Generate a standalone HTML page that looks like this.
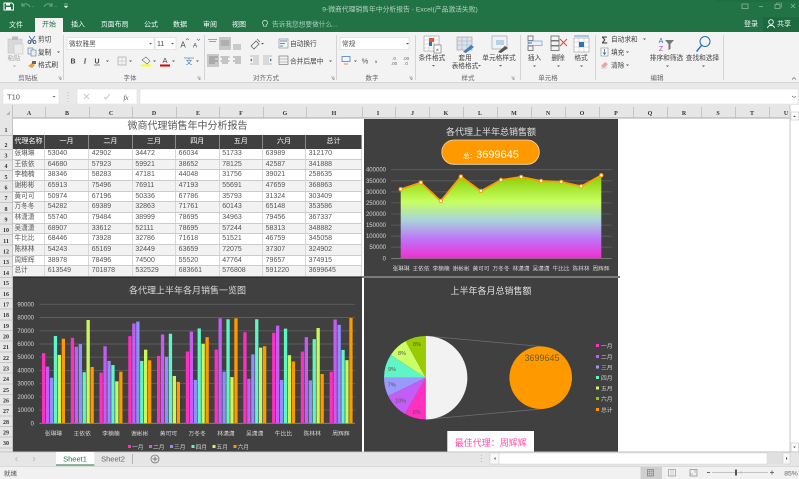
<!DOCTYPE html>
<html lang="zh-CN"><head><meta charset="utf-8"><title>Excel</title>
<style>
html,body{margin:0;padding:0;background:#fff;width:799px;height:479px;overflow:hidden}
body{position:relative;font-family:"Liberation Sans","Noto Sans CJK SC",sans-serif;filter:blur(.25px)}
#grid{position:absolute;left:362px;top:118px;width:428px;height:334px;background-color:#fff}
#t{position:absolute;left:13px;top:118px;width:349px;background:#fff;color:#555}
#t h1{margin:0;height:17px;line-height:17px;font-size:10px;font-weight:normal;text-align:center;color:#595959}
.r{display:grid;grid-template-columns:32px 44px 43.7px 43.3px 43.6px 43.4px 43px 56px;height:10.67px;line-height:10px;font-size:7px;box-sizing:border-box;border-bottom:1px solid #cccccc}
.r span{padding-left:2.7px;border-right:1px solid #d8d8d8;white-space:nowrap;overflow:hidden}
.r:nth-child(odd){background:#f2f2f2}
.r span:first-child{padding-left:1.5px;font-size:6.7px}
.h{height:14px;line-height:14px;background:#404040;color:#fff;border:0;font-weight:normal;background:#404040!important}
.h span{text-align:center;padding:0;border-right:1px solid #8a8a8a}
.h span:first-child{padding:0;font-size:7px}
svg{position:absolute;left:0;top:0}
svg text{font-family:"Liberation Sans","Noto Sans CJK SC",sans-serif}
.c{text-anchor:middle}.e{text-anchor:end}
.tb{font-size:7px;fill:#f4f9f6}
.rb{font-size:6.7px;fill:#444}
.lb{font-size:6.5px;fill:#666}
.h6{font-size:6px;fill:#333;font-family:"Liberation Serif",serif!important;text-anchor:middle;font-weight:bold}
.rn{font-size:6px;fill:#333;font-family:"Liberation Serif",serif!important;text-anchor:middle;font-weight:bold}
.ax{font-size:6px;fill:#d4d4d4}
.ic{fill:none;stroke:#666;stroke-width:.8}
.m{fill:#ff2fc0}.f{fill:#c55cf5}.a{fill:#8f8ffb}.p{fill:#5ff5c5}.y{fill:#c8f85a}.j{fill:#ff9900}
</style></head><body>
<div id="grid"></div>
<div id="t">
<h1>微商代理销售年中分析报告</h1>
<div>
<div class="r h"><span>代理名称</span><span>一月</span><span>二月</span><span>三月</span><span>四月</span><span>五月</span><span>六月</span><span>总计</span></div>
<div class="r" style="background:#fff"><span>张琳琳</span><span>53040</span><span>42902</span><span>34472</span><span>66034</span><span>51733</span><span>63989</span><span>312170</span></div>
<div class="r" style="background:#f2f2f2"><span>王依依</span><span>64680</span><span>57923</span><span>59921</span><span>38652</span><span>78125</span><span>42587</span><span>341888</span></div>
<div class="r" style="background:#fff"><span>李楠楠</span><span>38346</span><span>58283</span><span>47181</span><span>44048</span><span>31756</span><span>39021</span><span>258635</span></div>
<div class="r" style="background:#f2f2f2"><span>谢彬彬</span><span>65913</span><span>75496</span><span>76911</span><span>47193</span><span>55691</span><span>47659</span><span>368863</span></div>
<div class="r" style="background:#fff"><span>黄可可</span><span>50974</span><span>67196</span><span>50336</span><span>67786</span><span>35793</span><span>31324</span><span>303409</span></div>
<div class="r" style="background:#f2f2f2"><span>万冬冬</span><span>54282</span><span>69389</span><span>32863</span><span>71761</span><span>60143</span><span>65148</span><span>353586</span></div>
<div class="r" style="background:#fff"><span>林潇潇</span><span>55740</span><span>79484</span><span>38999</span><span>78695</span><span>34963</span><span>79456</span><span>367337</span></div>
<div class="r" style="background:#f2f2f2"><span>吴潇潇</span><span>68907</span><span>33612</span><span>52111</span><span>78695</span><span>57244</span><span>58313</span><span>348882</span></div>
<div class="r" style="background:#fff"><span>牛比比</span><span>68446</span><span>73928</span><span>32786</span><span>71618</span><span>51521</span><span>46759</span><span>345058</span></div>
<div class="r" style="background:#f2f2f2"><span>陈林林</span><span>54243</span><span>65169</span><span>32449</span><span>63659</span><span>72075</span><span>37307</span><span>324902</span></div>
<div class="r" style="background:#fff"><span>周辉辉</span><span>38978</span><span>78496</span><span>74500</span><span>55520</span><span>47764</span><span>79657</span><span>374915</span></div>
<div class="r" style="background:#f2f2f2"><span>总计</span><span>613549</span><span>701878</span><span>532529</span><span>683661</span><span>576808</span><span>591220</span><span>3699645</span></div>
</div>
</div>
<svg width="799" height="479" viewBox="0 0 799 479">
<defs>
<linearGradient id="ag" gradientUnits="userSpaceOnUse" x1="0" y1="175" x2="0" y2="258.3">
<stop offset="0" stop-color="#88cc00"/><stop offset=".32" stop-color="#c8ff60"/><stop offset=".54" stop-color="#a8d4dc"/><stop offset=".78" stop-color="#c070f8"/><stop offset="1" stop-color="#f22fd0"/>
</linearGradient>
</defs>
<!-- title bar -->
<rect width="799" height="32" fill="#217346"/>
<rect x="715" y="0" width="84" height="2" fill="#1f6e42"/>
<path d="M4 3h8l1.500 1.500V10H4z" fill="none" stroke="#fff" stroke-width="1"/><rect x="6" y="3" width="4" height="2.500" fill="#fff"/><rect x="6" y="7" width="5" height="3" fill="#fff"/>
<path d="M22 6c2-3 6-3 8 1M22 3v3h3" fill="none" stroke="#6fa387" stroke-width="1"/><path d="M32 6l2 0-1 1z" fill="#6fa387"/>
<path d="M52 6c-2-3-6-3-8 1M52 3v3h-3" fill="none" stroke="#6fa387" stroke-width="1"/><path d="M55 6l2 0-1 1z" fill="#6fa387"/>
<path d="M64 4h4M64 6l2 2 2-2z" fill="#d8e8de" stroke="#d8e8de" stroke-width=".5"/>
<text x="400" y="11.500" class="c" style="font-size:6.800px;fill:#b5d3c1">9-微商代理销售年中分析报告 - Excel(产品激活失败)</text>
<rect x="742" y="4" width="6" height="4.500" fill="none" stroke="#8ab59b" stroke-width=".8"/>
<path d="M759 6.500h4" stroke="#8ab59b" stroke-width=".8"/>
<rect x="775" y="4.500" width="5" height="4" fill="none" stroke="#8ab59b" stroke-width=".8"/><path d="M776.500 4.500V3h5v4h-1.500" fill="none" stroke="#8ab59b" stroke-width=".6"/>
<path d="M791 4l4 4M795 4l-4 4" stroke="#8ab59b" stroke-width=".8"/>
<rect x="35" y="18" width="28" height="15" fill="#f3f3f3"/>
<text x="16" y="27" class="c tb">文件</text>
<text x="49" y="26.500" class="c" style="font-size:7px;fill:#217346">开始</text>
<text x="78" y="26.500" class="c tb">插入</text>
<text x="114.700" y="26.500" class="c tb">页面布局</text>
<text x="151" y="26.500" class="c tb">公式</text>
<text x="180" y="26.500" class="c tb">数据</text>
<text x="210" y="26.500" class="c tb">审阅</text>
<text x="239" y="26.500" class="c tb">视图</text>
<path d="M265 20.500a2.300 2.300 0 0 1 1.500 4.200v1.500h-3v-1.500a2.300 2.300 0 0 1 1.500-4.200z" fill="none" stroke="#d8e8de" stroke-width=".7"/>
<text x="272" y="26.500" style="font-size:6.700px;fill:#a5cbb4">告诉我您想要做什么...</text>
<text x="751" y="26" class="c tb">登录</text>
<rect x="763" y="17" width="36" height="15" fill="#1d6a40"/>
<circle cx="771" cy="22" r="2.300" fill="none" stroke="#fff" stroke-width=".9"/><path d="M767.500 28c.5-3.500 6.500-3.500 7 0" fill="none" stroke="#fff" stroke-width=".9"/>
<text x="784" y="26" class="c tb">共享</text>
<!-- ribbon -->
<rect y="32" width="799" height="51" fill="#f3f3f3"/>
<rect y="83" width="799" height="22" fill="#e9e9e9"/>
<rect y="82" width="799" height="1" fill="#d6d6d6"/>
<path d="M63.500 35v45M204.500 35v45M336.500 35v45M415.500 35v45M520.500 35v45M595.500 35v45M723.500 35v45" stroke="#d4d4d4"/>
<!-- clipboard -->
<rect x="8" y="39" width="14" height="14" fill="#d9d9d9" stroke="#c0c0c0" stroke-width=".6"/><rect x="12" y="36.500" width="6" height="3.500" fill="#bdbdbd"/><rect x="14" y="44" width="9" height="10" fill="#ececec" stroke="#c8c8c8" stroke-width=".6"/>
<text x="14" y="60" class="c" style="font-size:6.500px;fill:#a8a8a8">粘贴</text><path d="M13 65.500h3l-1.500 1.500z" fill="#aaa"/>
<path d="M29 36l5 7M35 36l-5 7" stroke="#2f72b5" stroke-width=".9"/><circle cx="29.500" cy="42" r="1.500" fill="none" stroke="#444" stroke-width=".7"/><circle cx="34.500" cy="42" r="1.500" fill="none" stroke="#444" stroke-width=".7"/>
<text x="38" y="41.500" class="rb">剪切</text>
<rect x="28" y="48" width="5" height="6" fill="#eee" stroke="#6c8cb0" stroke-width=".7"/><rect x="31" y="50" width="5" height="6" fill="#eee" stroke="#6c8cb0" stroke-width=".7"/>
<text x="38" y="54.500" class="rb">复制</text><path d="M57 51.500h3l-1.500 1.500z" fill="#555"/>
<path d="M28 66l4-3 3 2-3 3z" fill="#e8a33c"/><rect x="32" y="61" width="4" height="3" fill="#666"/>
<text x="38" y="67" class="rb">格式刷</text>
<text x="28" y="80" class="c lb">剪贴板</text><path d="M58 77h3v3M61 80l-2-2" fill="none" stroke="#888" stroke-width=".6"/>
<!-- font -->
<rect x="67" y="37.500" width="87" height="12" fill="#fff" stroke="#d8d8d8" stroke-width=".6"/>
<text x="69" y="46" style="font-size:6.700px;fill:#555">微软雅黑</text><path d="M149 43h3l-1.500 1.500z" fill="#555"/>
<rect x="155" y="37.500" width="21" height="12" fill="#fff" stroke="#d8d8d8" stroke-width=".6"/>
<text x="157" y="46" style="font-size:7px;fill:#444">11</text><path d="M171 43h3l-1.500 1.500z" fill="#555"/>
<text x="183" y="47.500" class="c" style="font-size:8px;fill:#444">A</text><path d="M186 40l1.500-1.500 1.500 1.500" fill="none" stroke="#2f72b5" stroke-width=".6"/>
<text x="195" y="47.500" class="c" style="font-size:6.500px;fill:#444">A</text><path d="M197 39l1.500 1.500 1.500-1.500" fill="none" stroke="#2f72b5" stroke-width=".6"/>
<text x="73" y="63.500" class="c" style="font-size:7px;font-weight:bold;fill:#444">B</text>
<text x="85" y="63.500" class="c" style="font-size:7px;font-style:italic;font-family:'Liberation Serif',serif;font-weight:bold;fill:#444">I</text>
<text x="97" y="63.500" class="c" style="font-size:7px;font-weight:bold;fill:#444">U</text><path d="M94 65h6" stroke="#444" stroke-width=".6"/><path d="M106 60.500h3l-1.500 1.500z" fill="#555"/>
<rect x="118" y="57" width="8" height="8" fill="none" stroke="#999" stroke-width=".6"/><path d="M122 57v8M118 61h8" stroke="#bbb" stroke-width=".5"/><path d="M129 60.500h3l-1.500 1.500z" fill="#555"/>
<path d="M142 60l4-3 4 4-3 3z" fill="#f5f5f5" stroke="#666" stroke-width=".6"/><rect x="141" y="64.500" width="10" height="2" fill="#ffff00"/><path d="M153 60.500h3l-1.500 1.500z" fill="#555"/>
<text x="165" y="63" class="c" style="font-size:7.500px;fill:#444">A</text><rect x="160" y="64.500" width="10" height="2" fill="#e00000"/><path d="M172 60.500h3l-1.500 1.500z" fill="#555"/>
<text x="189" y="64" class="c" style="font-size:6.500px;fill:#2f72b5">文</text><path d="M184 58h10" stroke="#2f72b5" stroke-width=".6"/><path d="M196 60.500h3l-1.500 1.500z" fill="#555"/>
<text x="130" y="80" class="c lb">字体</text><path d="M197 77h3v3M200 80l-2-2" fill="none" stroke="#888" stroke-width=".6"/>
<!-- align -->
<rect x="219" y="37" width="12" height="13" fill="#c8c8c8"/><rect x="207" y="54" width="12" height="13" fill="#c8c8c8"/>
<path d="M208 39.500h9M209 41.500h7M220.500 41h9M220.500 43h9M220.500 45h9M233 45h8M233 47h8M233 49h8" stroke="#888" stroke-width=".7"/>
<path d="M209 57h9M209 59h6M209 61h9M209 63h6M220.500 57h9M222 59h6M220.500 61h9M222 63h6M233 57h8M235 59h6M233 61h8M235 63h6" stroke="#777" stroke-width=".7"/>
<path d="M251 46l5-5 3 3-5 5zM257 39l3 3" fill="none" stroke="#666" stroke-width=".8"/><path d="M261 43h3l-1.500 1.500z" fill="#555"/>
<path d="M250 56h9M250 64h9M253 58h6M253 60h6M253 62h6M263 56h9M263 64h9M263 58h6M263 60h6M263 62h6" stroke="#888" stroke-width=".6"/><path d="M250 60l2-1.500v3zM272 60l-2-1.500v3z" fill="#2f72b5"/>
<rect x="279" y="39" width="9" height="9" fill="none" stroke="#888" stroke-width=".6"/><path d="M280 41h7M280 43.500h5M280 46h3" stroke="#2f72b5" stroke-width=".7"/>
<text x="290" y="46" class="rb">自动换行</text>
<rect x="279" y="56" width="9" height="8.500" fill="none" stroke="#666" stroke-width=".6"/><path d="M279 59h9M279 62h9" stroke="#888" stroke-width=".6"/>
<text x="290" y="63.500" class="rb">合并后居中</text><path d="M329 60.500h3l-1.500 1.500z" fill="#555"/>
<text x="266" y="80" class="c lb">对齐方式</text><path d="M331 77h3v3M334 80l-2-2" fill="none" stroke="#888" stroke-width=".6"/>
<!-- number -->
<rect x="340" y="37.500" width="69" height="12" fill="#fff" stroke="#d8d8d8" stroke-width=".6"/>
<text x="342" y="46" style="font-size:6.700px;fill:#555">常规</text><path d="M406 43h3l-1.500 1.500z" fill="#555"/>
<rect x="342" y="56.500" width="8" height="5" fill="none" stroke="#2f72b5" stroke-width=".7"/><path d="M344 64h4" stroke="#d89a30" stroke-width="1"/><path d="M354 60.500h3l-1.500 1.500z" fill="#555"/>
<text x="365" y="63.500" class="c" style="font-size:7.500px;fill:#555">%</text>
<text x="376" y="62" class="c" style="font-size:8px;font-weight:bold;fill:#555">,</text>
<text x="394" y="60" class="c" style="font-size:4.500px;fill:#666">.0</text><text x="394" y="65" class="c" style="font-size:4.500px;fill:#666">.00</text>
<text x="406" y="60" class="c" style="font-size:4.500px;fill:#666">.00</text><text x="406" y="65" class="c" style="font-size:4.500px;fill:#666">.0</text>
<text x="372" y="80" class="c lb">数字</text><path d="M409 77h3v3M412 80l-2-2" fill="none" stroke="#888" stroke-width=".6"/>
<!-- styles -->
<rect x="424" y="36" width="15" height="15" fill="#fff" stroke="#999" stroke-width=".6"/><path d="M424 40h15M424 44h15M424 48h15M429 36v15M434 36v15" stroke="#bbb" stroke-width=".5"/><rect x="429" y="38" width="5" height="4" fill="#e8553a"/><rect x="429" y="42" width="3" height="4" fill="#2f72b5"/><rect x="434" y="45" width="7" height="8" fill="#fff" stroke="#666" stroke-width=".6"/><text x="437.500" y="51.500" class="c" style="font-size:5px;fill:#444">≠</text>
<text x="432" y="60" class="c rb">条件格式</text><path d="M432 65h3l-1.500 1.500z" fill="#555"/>
<rect x="457" y="37" width="15" height="13" fill="#d9e3ef" stroke="#999" stroke-width=".6"/><path d="M457 41h15M457 45h15M462 37v13M467 37v13" stroke="#aab" stroke-width=".5"/><path d="M463 52l8-7 3 2-8 6z" fill="#3a7fbf"/>
<text x="465" y="60" class="c rb">套用</text><text x="465" y="68" class="c rb">表格格式</text><path d="M478 65h3l-1.500 1.500z" fill="#555"/>
<rect x="492" y="36" width="15" height="13" fill="#eef3f8" stroke="#999" stroke-width=".6"/><rect x="496" y="40" width="8" height="5" fill="#b8d0e8"/><path d="M498 52l7-6 3 2-7 5z" fill="#555"/>
<text x="499" y="60" class="c rb">单元格样式</text><path d="M499 65h3l-1.500 1.500z" fill="#555"/>
<text x="468" y="80" class="c lb">样式</text><path d="M511 77h3v3M514 80l-2-2" fill="none" stroke="#888" stroke-width=".6"/>
<!-- cells -->
<rect x="528" y="36" width="5" height="4.500" class="ic"/><rect x="528" y="46" width="5" height="4.500" class="ic"/><rect x="528" y="41" width="14" height="4.500" fill="#eef" stroke="#5f8fc0" stroke-width=".6"/><path d="M528 43h4" stroke="#2f72b5"/>
<text x="534.500" y="60" class="c rb">插入</text><path d="M533 65.500h3l-1.500 1.500z" fill="#555"/>
<rect x="551" y="36" width="8" height="4.500" class="ic"/><rect x="551" y="46" width="8" height="4.500" class="ic"/><rect x="551" y="41" width="8" height="4.500" class="ic"/><path d="M560 39l7 7M567 39l-7 7" stroke="#e2492f" stroke-width="1"/>
<text x="558" y="60" class="c rb">删除</text><path d="M557 65.500h3l-1.500 1.500z" fill="#555"/>
<rect x="574" y="38" width="15" height="14" fill="#fff" stroke="#999" stroke-width=".6"/><path d="M574 42h15M574 47h15M579 38v14M584 38v14" stroke="#bbb" stroke-width=".5"/><rect x="579" y="42" width="5" height="5" fill="#2f72b5"/><path d="M574 36h15" stroke="#2f72b5" stroke-width=".7"/>
<text x="581" y="60" class="c rb">格式</text><path d="M580 65.500h3l-1.500 1.500z" fill="#555"/>
<text x="548" y="80" class="c lb">单元格</text>
<!-- edit -->
<text x="604.500" y="43.500" class="c" style="font-size:10px;font-weight:bold;fill:#444">Σ</text>
<text x="611" y="41.500" class="rb">自动求和</text><path d="M643 38.500h3l-1.500 1.500z" fill="#555"/>
<rect x="601" y="48" width="7" height="8" fill="#fff" stroke="#888" stroke-width=".6"/><path d="M604.500 49v5M603 52.500l1.500 2 1.500-2" stroke="#2f72b5" stroke-width=".8" fill="none"/>
<text x="611" y="54.500" class="rb">填充</text><path d="M626 51.500h3l-1.500 1.500z" fill="#555"/>
<path d="M601 66l4-4 3 2-4 4z" fill="#f0a0a8"/><path d="M601 68h6" stroke="#bbb" stroke-width=".6"/>
<text x="611" y="67.500" class="rb">清除</text><path d="M626 64.500h3l-1.500 1.500z" fill="#555"/>
<text x="661" y="43" class="c" style="font-size:7px;fill:#2f72b5">A</text><text x="661" y="51" class="c" style="font-size:7px;fill:#a24ac8">Z</text>
<path d="M665 40h9l-3.500 4v5l-2 1v-6z" fill="#777"/>
<text x="666.500" y="60" class="c rb">排序和筛选</text><path d="M666 65.500h3l-1.500 1.500z" fill="#555"/>
<circle cx="705" cy="41.500" r="5" fill="none" stroke="#2f72b5" stroke-width="1.100"/><path d="M701.500 45.500l-5 6" stroke="#2f72b5" stroke-width="1.400"/>
<text x="702.500" y="60" class="c rb">查找和选择</text><path d="M702 65.500h3l-1.500 1.500z" fill="#555"/>
<text x="657" y="80" class="c lb">编辑</text>
<path d="M792 79.500l2-2 2 2" fill="none" stroke="#666" stroke-width=".7"/>
<!-- formula bar -->
<rect x="3" y="89" width="56" height="15" fill="#fff" stroke="#dcdcdc" stroke-width=".5"/><text x="7" y="99.500" style="font-size:7.500px;fill:#555">T10</text><path d="M52.500 96h3l-1.500 1.500z" fill="#666"/>
<path d="M68 92v1M68 95v1M68 98v1M68 101v1" stroke="#b5b5b5" stroke-width=".9"/>
<rect x="77" y="89" width="60" height="15" fill="#fff" stroke="#dcdcdc" stroke-width=".5"/>
<path d="M84 94l5 5M89 94l-5 5" stroke="#bbb" stroke-width=".8"/><path d="M104 97l2 2 4-5" fill="none" stroke="#bbb" stroke-width=".8"/><text x="126" y="100" class="c" style="font-size:7px;font-style:italic;font-family:'Liberation Serif',serif;fill:#555">fx</text>
<rect x="140" y="89" width="658" height="15" fill="#fff" stroke="#dcdcdc" stroke-width=".5"/><path d="M792 96l2 1.500 2-1.500" fill="none" stroke="#666" stroke-width=".6"/>
<!-- column headers -->
<rect y="105" width="790" height="13" fill="#e6e6e6"/><rect y="117.500" width="790" height="1" fill="#a8a8a8"/>
<rect y="105" width="13" height="347" fill="#e6e6e6"/>
<path d="M6 115l4 0v-4z" fill="#b8b8b8"/>
<path d="M12.500 105V452M45.500 107v11M89.500 107v11M132.500 107v11M176.500 107v11M219.500 107v11M263.500 107v11M306.500 107v11M362.500 107v11M395.500 107v11M429.500 107v11M463.500 107v11M497.500 107v11M531.500 107v11M565.500 107v11M599.500 107v11M633.500 107v11M667.500 107v11M701.500 107v11M735.500 107v11M769.500 107v11" stroke="#bcbcbc" stroke-width=".8"/>
<g>
<text x="29" y="115" class="h6">A</text><text x="67" y="115" class="h6">B</text><text x="111" y="115" class="h6">C</text><text x="154" y="115" class="h6">D</text><text x="198" y="115" class="h6">E</text><text x="241" y="115" class="h6">F</text><text x="285" y="115" class="h6">G</text><text x="334" y="115" class="h6">H</text>
<text x="378" y="115" class="h6">I</text><text x="412.500" y="115" class="h6">J</text><text x="446" y="115" class="h6">K</text><text x="480" y="115" class="h6">L</text><text x="514" y="115" class="h6">M</text><text x="548" y="115" class="h6">N</text><text x="582" y="115" class="h6">O</text><text x="616" y="115" class="h6">P</text><text x="650" y="115" class="h6">Q</text><text x="684" y="115" class="h6">R</text><text x="718" y="115" class="h6">S</text><text x="752" y="115" class="h6">T</text><text x="786" y="115" class="h6">U</text>
</g>
<path d="M0 135.500h13M0 149.500h13M0 160h13M0 170.500h13M0 181h13M0 192h13M0 202.500h13M0 213h13M0 224h13M0 234.500h13M0 245h13M0 256h13M0 266.500h13M0 277.500h13M0 288h13M0 298.500h13M0 309h13M0 320h13M0 330.500h13M0 341h13M0 352h13M0 362.500h13M0 373h13M0 384h13M0 394.500h13M0 405h13M0 416h13M0 426.500h13M0 437h13M0 448h13" stroke="#bcbcbc" stroke-width=".7"/>
<g>
<text x="6" y="132" class="rn">1</text><text x="6" y="147" class="rn">2</text><text x="6" y="157.500" class="rn">3</text><text x="6" y="168" class="rn">4</text><text x="6" y="179" class="rn">5</text><text x="6" y="189.500" class="rn">6</text><text x="6" y="200" class="rn">7</text><text x="6" y="211" class="rn">8</text><text x="6" y="221.500" class="rn">9</text><text x="6" y="232" class="rn">10</text><text x="6" y="243" class="rn">11</text><text x="6" y="253.500" class="rn">12</text><text x="6" y="264" class="rn">13</text><text x="6" y="275" class="rn">14</text>
<text x="6" y="285" class="rn">15</text><text x="6" y="296" class="rn">16</text><text x="6" y="306.500" class="rn">17</text><text x="6" y="317" class="rn">18</text><text x="6" y="328" class="rn">19</text><text x="6" y="338.500" class="rn">20</text><text x="6" y="349" class="rn">21</text><text x="6" y="360" class="rn">22</text><text x="6" y="370.500" class="rn">23</text><text x="6" y="381" class="rn">24</text><text x="6" y="392" class="rn">25</text><text x="6" y="402.500" class="rn">26</text><text x="6" y="413" class="rn">27</text><text x="6" y="424" class="rn">28</text><text x="6" y="434.500" class="rn">29</text><text x="6" y="445" class="rn">30</text>
</g>
<!-- bar chart -->
<rect x="13" y="277" width="349" height="175" fill="#404040"/>
<rect x="13" y="276.500" width="349" height="1.500" fill="#2e2e2e"/>
<text x="187.500" y="293.500" class="c" style="font-size:9px;fill:#d9d9d9">各代理上半年各月销售一览图</text>
<path d="M39.500 304.300H355M39.500 317.500H355M39.500 330.800H355M39.500 344H355M39.500 357.200H355M39.500 370.400H355M39.500 383.600H355M39.500 396.900H355M39.500 410.100H355" stroke="#5e5e5e" stroke-width=".9"/>
<path d="M39.500 423.300H355" stroke="#8a8a8a" stroke-width=".8"/>
<g class="ax e">
<text x="34" y="306.300">90000</text><text x="34" y="319.500">80000</text><text x="34" y="332.800">70000</text><text x="34" y="346">60000</text><text x="34" y="359.200">50000</text><text x="34" y="372.400">40000</text><text x="34" y="385.600">30000</text><text x="34" y="398.900">20000</text><text x="34" y="412.100">10000</text><text x="34" y="425.300">0</text>
</g>
<g transform="translate(42,423.300) scale(1,-0.001322)"><rect x="0" width="3.300" height="53040" class="m"/><rect x="3.900" width="3.300" height="42902" class="f"/><rect x="7.900" width="3.300" height="34472" class="a"/><rect x="11.800" width="3.300" height="66034" class="p"/><rect x="15.700" width="3.300" height="51733" class="y"/><rect x="19.700" width="3.300" height="63989" class="j"/></g>
<g transform="translate(70.800,423.300) scale(1,-0.001322)"><rect x="0" width="3.300" height="64680" class="m"/><rect x="3.900" width="3.300" height="57923" class="f"/><rect x="7.900" width="3.300" height="59921" class="a"/><rect x="11.800" width="3.300" height="38652" class="p"/><rect x="15.700" width="3.300" height="78125" class="y"/><rect x="19.700" width="3.300" height="42587" class="j"/></g>
<g transform="translate(99.500,423.300) scale(1,-0.001322)"><rect x="0" width="3.300" height="38346" class="m"/><rect x="3.900" width="3.300" height="58283" class="f"/><rect x="7.900" width="3.300" height="47181" class="a"/><rect x="11.800" width="3.300" height="44048" class="p"/><rect x="15.700" width="3.300" height="31756" class="y"/><rect x="19.700" width="3.300" height="39021" class="j"/></g>
<g transform="translate(128.300,423.300) scale(1,-0.001322)"><rect x="0" width="3.300" height="65913" class="m"/><rect x="3.900" width="3.300" height="75496" class="f"/><rect x="7.900" width="3.300" height="76911" class="a"/><rect x="11.800" width="3.300" height="47193" class="p"/><rect x="15.700" width="3.300" height="55691" class="y"/><rect x="19.700" width="3.300" height="47659" class="j"/></g>
<g transform="translate(157,423.300) scale(1,-0.001322)"><rect x="0" width="3.300" height="50974" class="m"/><rect x="3.900" width="3.300" height="67196" class="f"/><rect x="7.900" width="3.300" height="50336" class="a"/><rect x="11.800" width="3.300" height="67786" class="p"/><rect x="15.700" width="3.300" height="35793" class="y"/><rect x="19.700" width="3.300" height="31324" class="j"/></g>
<g transform="translate(185.800,423.300) scale(1,-0.001322)"><rect x="0" width="3.300" height="54282" class="m"/><rect x="3.900" width="3.300" height="69389" class="f"/><rect x="7.900" width="3.300" height="32863" class="a"/><rect x="11.800" width="3.300" height="71761" class="p"/><rect x="15.700" width="3.300" height="60143" class="y"/><rect x="19.700" width="3.300" height="65148" class="j"/></g>
<g transform="translate(214.600,423.300) scale(1,-0.001322)"><rect x="0" width="3.300" height="55740" class="m"/><rect x="3.900" width="3.300" height="79484" class="f"/><rect x="7.900" width="3.300" height="38999" class="a"/><rect x="11.800" width="3.300" height="78695" class="p"/><rect x="15.700" width="3.300" height="34963" class="y"/><rect x="19.700" width="3.300" height="79456" class="j"/></g>
<g transform="translate(243.300,423.300) scale(1,-0.001322)"><rect x="0" width="3.300" height="68907" class="m"/><rect x="3.900" width="3.300" height="33612" class="f"/><rect x="7.900" width="3.300" height="52111" class="a"/><rect x="11.800" width="3.300" height="78695" class="p"/><rect x="15.700" width="3.300" height="57244" class="y"/><rect x="19.700" width="3.300" height="58313" class="j"/></g>
<g transform="translate(272.100,423.300) scale(1,-0.001322)"><rect x="0" width="3.300" height="68446" class="m"/><rect x="3.900" width="3.300" height="73928" class="f"/><rect x="7.900" width="3.300" height="32786" class="a"/><rect x="11.800" width="3.300" height="71618" class="p"/><rect x="15.700" width="3.300" height="51521" class="y"/><rect x="19.700" width="3.300" height="46759" class="j"/></g>
<g transform="translate(300.800,423.300) scale(1,-0.001322)"><rect x="0" width="3.300" height="54243" class="m"/><rect x="3.900" width="3.300" height="65169" class="f"/><rect x="7.900" width="3.300" height="32449" class="a"/><rect x="11.800" width="3.300" height="63659" class="p"/><rect x="15.700" width="3.300" height="72075" class="y"/><rect x="19.700" width="3.300" height="37307" class="j"/></g>
<g transform="translate(329.600,423.300) scale(1,-0.001322)"><rect x="0" width="3.300" height="38978" class="m"/><rect x="3.900" width="3.300" height="78496" class="f"/><rect x="7.900" width="3.300" height="74500" class="a"/><rect x="11.800" width="3.300" height="55520" class="p"/><rect x="15.700" width="3.300" height="47764" class="y"/><rect x="19.700" width="3.300" height="79657" class="j"/></g>
<g class="c" style="font-size:5.800px;fill:#d4d4d4">
<text x="53.500" y="435.500">张琳琳</text><text x="82.200" y="435.500">王依依</text><text x="111" y="435.500">李楠楠</text><text x="139.700" y="435.500">谢彬彬</text><text x="168.500" y="435.500">黄可可</text><text x="197.200" y="435.500">万冬冬</text><text x="226" y="435.500">林潇潇</text><text x="254.700" y="435.500">吴潇潇</text><text x="283.500" y="435.500">牛比比</text><text x="312.200" y="435.500">陈林林</text><text x="341" y="435.500">周辉辉</text>
</g>
<rect x="128" y="445" width="3" height="3" class="m"/><rect x="149" y="445" width="3" height="3" class="f"/><rect x="170" y="445" width="3" height="3" class="a"/><rect x="191.500" y="445" width="3" height="3" class="p"/><rect x="212.500" y="445" width="3" height="3" class="y"/><rect x="233.500" y="445" width="3" height="3" class="j"/>
<g style="font-size:5.800px;fill:#d4d4d4">
<text x="132" y="449">一月</text><text x="153" y="449">二月</text><text x="174" y="449">三月</text><text x="195.500" y="449">四月</text><text x="216.500" y="449">五月</text><text x="237.500" y="449">六月</text>
</g>
<!-- area chart -->
<rect x="364" y="119" width="254" height="157" fill="#404040"/>
<text x="491" y="135" class="c" style="font-size:9px;fill:#e0e0e0">各代理上半年总销售额</text>
<rect x="441.800" y="140" width="97.500" height="24.300" rx="12" fill="#ff9900" stroke="#f3dcae" stroke-width=".8"/>
<text x="491" y="158" class="c" style="fill:#fff"><tspan style="font-size:6.500px">总：</tspan><tspan style="font-size:11px">3699645</tspan></text>
<path d="M391 169.700H611.700M391 180.800H611.700M391 191.900H611.700M391 202.900H611.700M391 214H611.700M391 225.100H611.700M391 236.200H611.700M391 247.200H611.700" stroke="#5e5e5e" stroke-width=".8"/>
<path d="M391 258.500H611.700" stroke="#8a8a8a" stroke-width=".8"/>
<path d="M400.700 189.200L420.800 182.600 440.800 201 460.900 176.600 480.900 191.100 501 180 521.100 176.900 541.100 181 561.200 181.900 581.200 186.300 601.300 175.300V258.300H400.700z" fill="url(#ag)"/>
<path d="M400.700 189.200L420.800 182.600 440.800 201 460.900 176.600 480.900 191.100 501 180 521.100 176.900 541.100 181 561.200 181.900 581.200 186.300 601.300 175.300" fill="none" stroke="#ff9900" stroke-width="1.800"/>
<g fill="#fff" stroke="#ff9900" stroke-width="1">
<circle cx="400.700" cy="189.200" r="1.700"/><circle cx="420.800" cy="182.600" r="1.700"/><circle cx="440.800" cy="201" r="1.700"/><circle cx="460.900" cy="176.600" r="1.700"/><circle cx="480.900" cy="191.100" r="1.700"/><circle cx="501" cy="180" r="1.700"/><circle cx="521.100" cy="176.900" r="1.700"/><circle cx="541.100" cy="181" r="1.700"/><circle cx="561.200" cy="181.900" r="1.700"/><circle cx="581.200" cy="186.300" r="1.700"/><circle cx="601.300" cy="175.300" r="1.700"/>
</g>
<g class="ax e">
<text x="386" y="171.700">400000</text><text x="386" y="182.800">350000</text><text x="386" y="193.900">300000</text><text x="386" y="204.900">250000</text><text x="386" y="216">200000</text><text x="386" y="227.100">150000</text><text x="386" y="238.200">100000</text><text x="386" y="249.200">50000</text><text x="386" y="260.300">0</text>
</g>
<g class="c" style="font-size:5.700px;fill:#d4d4d4">
<text x="401" y="270.500">张琳琳</text><text x="421" y="270.500">王依依</text><text x="441" y="270.500">李楠楠</text><text x="461" y="270.500">谢彬彬</text><text x="481" y="270.500">黄可可</text><text x="501" y="270.500">万冬冬</text><text x="521" y="270.500">林潇潇</text><text x="541" y="270.500">吴潇潇</text><text x="561" y="270.500">牛比比</text><text x="581" y="270.500">陈林林</text><text x="601" y="270.500">周辉辉</text>
</g>
<!-- pie chart -->
<rect x="364" y="278" width="254" height="174" fill="#404040"/>
<rect x="362" y="276" width="258" height="2" fill="#7a7a7a"/>
<text x="491" y="294" class="c" style="font-size:9px;fill:#e0e0e0">上半年各月总销售额</text>
<path d="M425.700 336L540.700 346.400M425.700 419.400L540.700 409" stroke="#6e6e6e" stroke-width=".8"/>
<path d="M425.700 336A41.700 41.700 0 0 1 425.700 419.400z" fill="#f2f2f2"/>
<path d="M425.700 377.700L425.700 419.400A41.700 41.700 0 0 1 404.950 413.870z" fill="#ff2fc0"/>
<path d="M425.700 377.700L404.950 413.870A41.700 41.700 0 0 1 388.200 396z" fill="#c55cf5"/>
<path d="M425.700 377.700L388.200 396A41.700 41.700 0 0 1 384 377.770z" fill="#9999ff"/>
<path d="M425.700 377.700L384 377.770A41.700 41.700 0 0 1 390.800 354.900z" fill="#5ff5c5"/>
<path d="M425.700 377.700L390.800 354.900A41.700 41.700 0 0 1 405.600 341.150z" fill="#ccff66"/>
<path d="M425.700 377.700L405.600 341.150A41.700 41.700 0 0 1 425.700 336z" fill="#99cc00"/>
<g class="c" style="font-size:5.500px;fill:#555">
<text x="416.700" y="414">8%</text><text x="400.700" y="402.500">10%</text><text x="391.700" y="386.500">7%</text><text x="392" y="371">9%</text><text x="402" y="355">8%</text><text x="417" y="346">8%</text>
</g>
<circle cx="540.700" cy="377.700" r="31.300" fill="#ff9900"/>
<text x="542" y="361" class="c" style="font-size:9px;fill:#6e5a2a">3699645</text>
<rect x="596" y="344" width="3" height="3" fill="#ff2fc0"/><rect x="596" y="355" width="3" height="3" fill="#c55cf5"/><rect x="596" y="365.500" width="3" height="3" fill="#9999ff"/><rect x="596" y="376" width="3" height="3" fill="#5ff5c5"/><rect x="596" y="386.500" width="3" height="3" fill="#ccff66"/><rect x="596" y="397" width="3" height="3" fill="#99cc00"/><rect x="596" y="408" width="3" height="3" fill="#ff9900"/>
<g style="font-size:5.800px;fill:#d4d4d4">
<text x="601" y="348">一月</text><text x="601" y="359">二月</text><text x="601" y="369.500">三月</text><text x="601" y="380">四月</text><text x="601" y="390.500">五月</text><text x="601" y="401">六月</text><text x="601" y="412">总计</text>
</g>
<rect x="447.300" y="431" width="86.700" height="21" fill="#fff"/>
<text x="490.700" y="446" class="c" style="font-size:9px;fill:#ff4fa8">最佳代理：周辉辉</text>
<!-- vertical scrollbar -->
<rect x="790" y="105" width="9" height="347" fill="#fff"/><rect x="789.500" y="105" width="1" height="347" fill="#c8c8c8"/>
<rect x="791" y="112" width="7.500" height="8" fill="#fff" stroke="#c4c4c4" stroke-width=".6"/><path d="M793 117l1.500-1.500 1.500 1.500z" fill="#555"/>
<rect x="791" y="443" width="7.500" height="9" fill="#fff" stroke="#c4c4c4" stroke-width=".6"/><path d="M793 446.500h3l-1.500 1.500z" fill="#555"/>
<!-- sheet tabs -->
<rect y="451.500" width="799" height="15" fill="#e6e6e6"/><rect y="451.500" width="799" height=".8" fill="#bdbdbd"/>
<path d="M17.500 457l-2 2 2 2M33 457l2 2-2 2" fill="none" stroke="#bbb" stroke-width=".8"/>
<rect x="56" y="452" width="38.300" height="13.500" fill="#fff"/><rect x="56" y="464.500" width="38.300" height="1" fill="#217346"/>
<text x="75" y="461.500" class="c" style="font-size:7.500px;fill:#217346">Sheet1</text>
<text x="113" y="461.500" class="c" style="font-size:7.500px;fill:#666">Sheet2</text>
<path d="M132.500 454v10" stroke="#aaa" stroke-width=".8"/>
<circle cx="155" cy="459" r="4" fill="none" stroke="#777" stroke-width=".8"/><path d="M155 456.500v5M152.500 459h5" stroke="#777" stroke-width=".9"/>
<path d="M481.500 455v1M481.500 458v1M481.500 461v1" stroke="#aaa" stroke-width=".8"/>
<rect x="490" y="453" width="9" height="11" fill="#f8f8f8" stroke="#c8c8c8" stroke-width=".5"/><path d="M495.500 457v3l-1.500-1.500z" fill="#444"/>
<rect x="499" y="453" width="268" height="11" fill="#fff" stroke="#d0d0d0" stroke-width=".5"/>
<rect x="767" y="453" width="16" height="11" fill="#e0e0e0"/>
<rect x="783" y="453" width="7" height="11" fill="#f8f8f8" stroke="#c8c8c8" stroke-width=".5"/><path d="M786 457v3l1.500-1.500z" fill="#444"/>
<!-- status bar -->
<rect y="466.500" width="799" height="12.500" fill="#f1f1f1"/><rect y="466" width="799" height=".8" fill="#d4d4d4"/>
<text x="4" y="475.500" style="font-size:6.500px;fill:#555">就绪</text>
<rect x="640.500" y="467" width="21.500" height="12" fill="#cfcfcf"/>
<rect x="647.500" y="469.500" width="6" height="6.500" fill="none" stroke="#777" stroke-width=".7"/><path d="M647.500 471.500h6M647.500 473.700h6M649.500 469.500v6.500M651.500 469.500v6.500" stroke="#888" stroke-width=".5"/>
<rect x="668.500" y="469.500" width="7" height="6.500" fill="none" stroke="#999" stroke-width=".7"/><path d="M671 469.500v6.500M673 469.500v6.500" stroke="#aaa" stroke-width=".5"/>
<rect x="690" y="469.500" width="7" height="6.500" fill="none" stroke="#888" stroke-width=".7"/><path d="M690 474h3M695 470v3" stroke="#888" stroke-width=".5"/>
<path d="M707 472.500h3" stroke="#555" stroke-width=".9"/><path d="M712 472.500h56" stroke="#999" stroke-width=".6"/><rect x="735" y="469.500" width="2" height="6" fill="#555"/><path d="M741 471v3" stroke="#999" stroke-width=".5"/>
<path d="M770 472.500h4M772 470.500v4" stroke="#555" stroke-width=".8"/>
<text x="791" y="475.500" class="c" style="font-size:6.800px;fill:#666">85%</text>
</svg>
</body></html>
